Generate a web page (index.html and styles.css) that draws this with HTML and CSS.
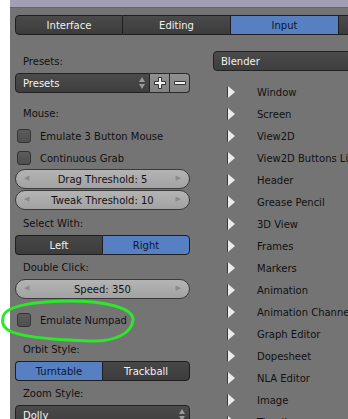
FILE: index.html
```html
<!DOCTYPE html>
<html lang="en">
<head>
  <meta charset="UTF-8" />
  <title>User Preferences - Input</title>
  <meta name="viewport" content="width=device-width, initial-scale=1.0" />
  <link rel="stylesheet" href="styles.css">
</head>
<body>
  <div class="window">
    <div class="topbar"></div>

    <div class="tabs">
      <div class="tab first">Interface</div>
      <div class="tab">Editing</div>
      <div class="tab active">Input</div>
      <div class="tab"></div>
    </div>

    <div class="content">
      <div class="col-left">
        <div class="label">Presets:</div>
        <div class="preset-row">
          <div class="menu grow">Presets<span class="updown"></span></div>
          <div class="icon-btn">
            <svg width="14" height="14" viewBox="0 0 14 14"><path d="M5.5 1.5h3v4h4v3h-4v4h-3v-4h-4v-3h4z" fill="#f2f2f2" stroke="#333" stroke-width="1"/></svg>
          </div>
          <div class="icon-btn last">
            <svg width="14" height="14" viewBox="0 0 14 14"><path d="M1.5 5.5h11v3h-11z" fill="#f2f2f2" stroke="#333" stroke-width="1"/></svg>
          </div>
        </div>

        <div class="label gap-10">Mouse:</div>
        <div class="check-row"><span class="checkbox"></span>Emulate 3 Button Mouse</div>
        <div class="check-row"><span class="checkbox"></span>Continuous Grab</div>
        <div class="slider"><span class="arr left">&#9664;</span>Drag Threshold: 5<span class="arr right">&#9654;</span></div>
        <div class="slider gap-1"><span class="arr left">&#9664;</span>Tweak Threshold: 10<span class="arr right">&#9654;</span></div>

        <div class="label gap-3">Select With:</div>
        <div class="radio">
          <div class="opt">Left</div>
          <div class="opt on">Right</div>
        </div>

        <div class="label gap-2">Double Click:</div>
        <div class="slider"><span class="arr left">&#9664;</span>Speed: 350<span class="arr right">&#9654;</span></div>

        <div class="check-row gap-10"><span class="checkbox"></span>Emulate Numpad</div>

        <div class="label gap-8">Orbit Style:</div>
        <div class="radio">
          <div class="opt on">Turntable</div>
          <div class="opt">Trackball</div>
        </div>

        <div class="label gap-2">Zoom Style:</div>
        <div class="menu">Dolly<span class="updown"></span></div>
      </div>

      <div class="col-right">
        <div class="menu wide">Blender</div>
        <ul class="keymaps">
          <li><span class="tri"></span>Window</li>
          <li><span class="tri"></span>Screen</li>
          <li><span class="tri"></span>View2D</li>
          <li><span class="tri"></span>View2D Buttons List</li>
          <li><span class="tri"></span>Header</li>
          <li><span class="tri"></span>Grease Pencil</li>
          <li><span class="tri"></span>3D View</li>
          <li><span class="tri"></span>Frames</li>
          <li><span class="tri"></span>Markers</li>
          <li><span class="tri"></span>Animation</li>
          <li><span class="tri"></span>Animation Channels</li>
          <li><span class="tri"></span>Graph Editor</li>
          <li><span class="tri"></span>Dopesheet</li>
          <li><span class="tri"></span>NLA Editor</li>
          <li><span class="tri"></span>Image</li>
          <li><span class="tri"></span>Timeline</li>
        </ul>
      </div>
    </div>
  </div>

  <svg class="scribble" width="140" height="50" viewBox="0 298 140 50">
    <path d="M3 318 C3 305 40 301 70 301 C105 301 134 308 133 320 C132 333 115 342 90 341 C60 340 20 338 8 330 C2 326 2 322 3 318" fill="none" stroke="#2be82b" stroke-width="3"/>
  </svg>
</body>
</html>
```

FILE: styles.css
```css
html, body {
  margin: 0;
  height: 100%;
}
body {
  background: #ffffff;
  font-family: "DejaVu Sans", sans-serif;
  font-size: 10px;
  color: #000;
  overflow: hidden;
  position: relative;
}
.window {
  margin-left: 10px;
  height: 100%;
  background: #747474;
}
.topbar {
  height: 7px;
  background: #a29fb5;
  border-bottom: 1px solid #66646f;
}
.tabs {
  display: flex;
  padding: 7px 0 0 5px;
  height: 20px;
}
.tab {
  width: 108px;
  height: 20px;
  box-sizing: border-box;
  background: linear-gradient(#4a4a4a, #3c3c3c);
  border: 1px solid #1e1e1e;
  border-left: none;
  color: #f0f0f0;
  display: flex;
  align-items: center;
  justify-content: center;
  flex-shrink: 0;
}
.tab.first {
  border-left: 1px solid #1e1e1e;
  border-radius: 4px 0 0 4px;
}
.tab.active {
  background: #5680c2;
  color: #0c1730;
}
.content {
  display: flex;
  padding-top: 16px;
}
.col-left {
  width: 175px;
  margin-left: 5px;
  flex-shrink: 0;
}
.col-right {
  margin-left: 23px;
  width: 200px;
  flex-shrink: 0;
}
.label {
  height: 22px;
  line-height: 22px;
  padding-left: 8px;
  color: #111;
}
.gap-1 { margin-top: 1px; }
.gap-2 { margin-top: 2px; }
.gap-3 { margin-top: 3px; }
.gap-8 { margin-top: 8px; }
.gap-10 { margin-top: 10px; }
.menu {
  height: 20px;
  box-sizing: border-box;
  background: linear-gradient(#4b4b4b, #3e3e3e);
  border: 1px solid #222;
  border-radius: 4px;
  color: #f2f2f2;
  padding-left: 7px;
  display: flex;
  align-items: center;
  position: relative;
}
.menu.wide {
  width: 200px;
}
.updown {
  position: absolute;
  right: 4px;
  top: 3px;
  width: 6px;
  height: 12px;
}
.updown::before, .updown::after {
  content: "";
  position: absolute;
  left: 0;
  border-left: 3px solid transparent;
  border-right: 3px solid transparent;
}
.updown::before {
  top: 0;
  border-bottom: 5px solid #9a9a9a;
}
.updown::after {
  bottom: 0;
  border-top: 5px solid #9a9a9a;
}
.preset-row {
  display: flex;
  height: 20px;
}
.preset-row .grow {
  flex: 1;
  border-radius: 4px 0 0 4px;
}
.icon-btn {
  width: 20px;
  height: 20px;
  box-sizing: border-box;
  background: linear-gradient(#909090, #828282);
  border: 1px solid #2a2a2a;
  border-left: none;
  display: flex;
  align-items: center;
  justify-content: center;
}
.icon-btn.last {
  border-radius: 0 4px 4px 0;
}
.check-row {
  height: 22px;
  display: flex;
  align-items: center;
  color: #111;
}
.checkbox {
  width: 14px;
  height: 14px;
  box-sizing: border-box;
  margin: 0 9px 0 2px;
  background: linear-gradient(#5c5c5c, #4e4e4e);
  border: 1px solid #333;
  border-radius: 3px;
}
.slider {
  height: 20px;
  box-sizing: border-box;
  background: linear-gradient(#b4b4b4, #a2a2a2);
  border: 1px solid #3a3a3a;
  border-radius: 10px;
  display: flex;
  align-items: center;
  justify-content: center;
  position: relative;
  color: #111;
}
.arr {
  position: absolute;
  top: 4px;
  font-size: 7px;
  color: #8a8a8a;
}
.arr.left { left: 8px; }
.arr.right { right: 8px; }
.radio {
  display: flex;
  height: 20px;
}
.opt {
  flex: 1;
  box-sizing: border-box;
  background: linear-gradient(#474747, #3c3c3c);
  border: 1px solid #1e1e1e;
  color: #f2f2f2;
  display: flex;
  align-items: center;
  justify-content: center;
}
.opt:first-child {
  border-radius: 4px 0 0 4px;
  border-right: none;
}
.opt:last-child {
  border-radius: 0 4px 4px 0;
}
.opt.on {
  background: #5680c2;
  color: #0c1730;
}
.keymaps {
  list-style: none;
  margin: 10px 0 0 0;
  padding: 0;
}
.keymaps li {
  height: 22px;
  display: flex;
  align-items: center;
  white-space: nowrap;
  color: #111;
}
.tri {
  width: 0;
  height: 0;
  margin: 0 22px 0 15px;
  border-top: 6px solid transparent;
  border-bottom: 6px solid transparent;
  border-left: 7px solid #ececec;
  filter: drop-shadow(-1px 0 0 #3a3a3a);
}
.scribble {
  position: absolute;
  left: 0;
  top: 298px;
}
```
